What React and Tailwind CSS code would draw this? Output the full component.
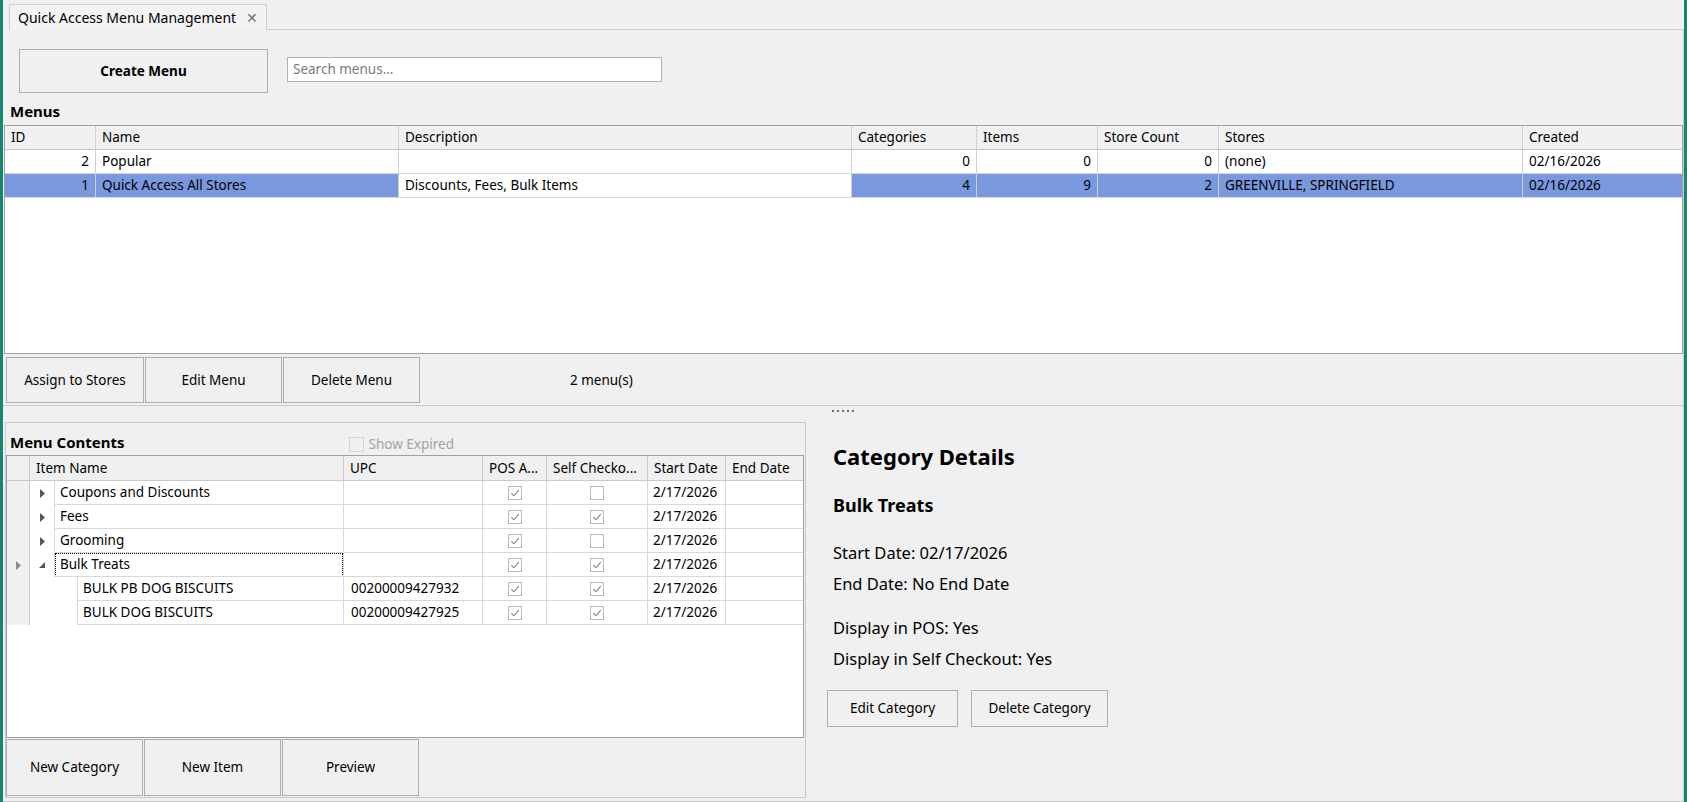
import React from 'react';

const menus = [
  { id: 2, name: 'Popular', desc: '', cats: 0, items: 0, count: 0, stores: '(none)', created: '02/16/2026' },
  { id: 1, name: 'Quick Access All Stores', desc: 'Discounts, Fees, Bulk Items', cats: 4, items: 9, count: 2, stores: 'GREENVILLE, SPRINGFIELD', created: '02/16/2026', selected: true },
];

const tree = [
  { name: 'Coupons and Discounts', level: 0, open: false, upc: '', pos: true, self: false },
  { name: 'Fees', level: 0, open: false, upc: '', pos: true, self: true },
  { name: 'Grooming', level: 0, open: false, upc: '', pos: true, self: false },
  { name: 'Bulk Treats', level: 0, open: true, upc: '', pos: true, self: true, current: true },
  { name: 'BULK PB DOG BISCUITS', level: 1, upc: '00200009427932', pos: true, self: true },
  { name: 'BULK DOG BISCUITS', level: 1, upc: '00200009427925', pos: true, self: true },
];

function Check({ checked }) {
  return (
    <span className="inline-flex w-[14px] h-[14px] items-center justify-center border border-[#b9b9b9] bg-white">
      {checked && (
        <svg width="10" height="10" viewBox="0 0 10 10">
          <path d="M1.3 5.2 L3.9 7.8 L8.8 2.2" fill="none" stroke="#808080" strokeWidth="1.1" />
        </svg>
      )}
    </span>
  );
}

function WinButton({ children, className = '' }) {
  return (
    <div className={`flex items-center justify-center border border-[#adadad] bg-[#f0f0f0] text-[13.5px] text-black ${className}`}>
      {children}
    </div>
  );
}

function MenusGrid() {
  const cell = 'h-full flex items-center border-r border-[#d0d0d0] px-[6px] truncate';
  return (
    <div className="ml-[1px] w-[1679px] h-[229px] border border-[#a0a0a0] bg-white flex flex-col text-[13.5px]">
      <div className="flex h-[24px] bg-[#f0f0f0] border-b border-[#c8c8c8]">
        <div className={`${cell} w-[91px]`}>ID</div>
        <div className={`${cell} w-[303px]`}>Name</div>
        <div className={`${cell} w-[453px]`}>Description</div>
        <div className={`${cell} w-[125px]`}>Categories</div>
        <div className={`${cell} w-[121px]`}>Items</div>
        <div className={`${cell} w-[121px]`}>Store Count</div>
        <div className={`${cell} w-[304px]`}>Stores</div>
        <div className="h-full flex items-center px-[6px] flex-1">Created</div>
      </div>
      {menus.map((m) => {
        const bg = m.selected ? 'bg-[#7a98dd]' : 'bg-white';
        return (
          <div key={m.id} className={`flex h-[24px] border-b border-[#d8d8d8] ${bg}`}>
            <div className={`${cell} w-[91px] justify-end`}>{m.id}</div>
            <div className={`${cell} w-[303px]`}>{m.name}</div>
            <div className={`${cell} w-[453px] bg-white`}>{m.desc}</div>
            <div className={`${cell} w-[125px] justify-end`}>{m.cats}</div>
            <div className={`${cell} w-[121px] justify-end`}>{m.items}</div>
            <div className={`${cell} w-[121px] justify-end`}>{m.count}</div>
            <div className={`${cell} w-[304px]`}>{m.stores}</div>
            <div className="h-full flex items-center px-[6px] flex-1">{m.created}</div>
          </div>
        );
      })}
      <div className="flex-1 bg-white" />
    </div>
  );
}

function Arrow({ open }) {
  if (open) {
    return (
      <svg width="6" height="6" viewBox="0 0 6 6">
        <polygon points="6,0 6,6 0,6" fill="#555555" />
      </svg>
    );
  }
  return (
    <svg width="5" height="9" viewBox="0 0 5 9">
      <polygon points="0,0 5,4.5 0,9" fill="#555555" />
    </svg>
  );
}

function ContentsGrid() {
  const hcell = 'h-full flex items-center border-r border-[#c8c8c8] px-[6px] truncate';
  return (
    <div className="w-[798px] h-[283px] border border-[#a0a0a0] bg-white flex flex-col text-[13.5px]">
      <div className="flex h-[25px] bg-[#f0f0f0] border-b border-[#c8c8c8] shrink-0">
        <div className="h-full w-[23px] border-r border-[#c8c8c8]" />
        <div className={`${hcell} w-[314px]`}>Item Name</div>
        <div className={`${hcell} w-[139px]`}>UPC</div>
        <div className={`${hcell} w-[64px]`}>POS A...</div>
        <div className={`${hcell} w-[101px]`}>Self Checko...</div>
        <div className={`${hcell} w-[78px]`}>Start Date</div>
        <div className="h-full flex items-center px-[6px] flex-1">End Date</div>
      </div>
      {tree.map((r) => (
        <div key={r.name} className="flex h-[24px] shrink-0">
          <div className="h-full w-[23px] bg-[#f0f0f0] border-r border-[#c8c8c8] flex items-center justify-center">
            {r.current && (
              <svg width="5" height="9" viewBox="0 0 5 9">
                <polygon points="0,0 5,4.5 0,9" fill="#8a8a8a" />
              </svg>
            )}
          </div>
          <div className={`h-full flex items-center justify-center ${r.level === 0 ? 'w-[24px]' : 'w-[47px]'}`}>
            {r.level === 0 && <Arrow open={r.open} />}
          </div>
          <div className="flex flex-1 h-full border-b border-[#d8d8d8]">
            <div className={`relative h-full flex items-center border-l border-r border-[#d8d8d8] px-[5px] truncate ${r.level === 0 ? 'w-[290px]' : 'w-[267px]'}`}>
              {r.name}
              {r.current && (
                <div className="absolute left-0 top-0 right-0 bottom-[-1px] border border-dotted border-black" />
              )}
            </div>
            <div className="h-full w-[139px] flex items-center border-r border-[#d8d8d8] px-[7px]">{r.upc}</div>
            <div className="h-full w-[64px] flex items-center justify-center border-r border-[#d8d8d8]">
              <Check checked={r.pos} />
            </div>
            <div className="h-full w-[101px] flex items-center justify-center border-r border-[#d8d8d8]">
              <Check checked={r.self} />
            </div>
            <div className="h-full w-[78px] flex items-center border-r border-[#d8d8d8] px-[5px]">2/17/2026</div>
            <div className="h-full flex-1" />
          </div>
        </div>
      ))}
      <div className="flex-1 bg-white" />
    </div>
  );
}

export default function App() {
  return (
    <div className="w-[1687px] h-[802px] flex bg-[#f0f0f0] overflow-hidden text-black font-['Segoe_UI','Noto_Sans',sans-serif]">
      <div className="w-[3px] h-full bg-[#12896f]" />
      <div className="flex-1 flex flex-col">
        {/* tab strip */}
        <div className="h-[30px] flex items-end shrink-0">
          <div className="w-[6px] h-full" />
          <div className="h-[26px] w-[258px] flex items-center border border-b-0 border-[#cfcfcf] bg-[#f3f3f3] pl-[8px] text-[14px]">
            <span>Quick Access Menu Management</span>
            <span className="ml-[10px] text-[#707070] text-[14px]">✕</span>
          </div>
          <div className="flex-1 h-full border-b border-[#cfcfcf]" />
        </div>

        <div className="flex-1 flex flex-col border-r border-b border-[#c8c8c8]">
          {/* top section */}
          <div className="flex flex-col shrink-0">
            <div className="flex items-start pt-[19px] pl-[16px]">
              <WinButton className="w-[249px] h-[44px] font-bold">Create Menu</WinButton>
              <div className="ml-[19px] mt-[8px] w-[375px] h-[25px] border border-[#b4b4b4] bg-white flex items-center px-[5px] text-[13.5px] text-[#7a7a7a]">
                Search menus...
              </div>
            </div>
            <div className="mt-[8px] h-[20px] flex items-center pl-[7px] text-[15px] font-bold">Menus</div>
            <div className="mt-[4px]">
              <MenusGrid />
            </div>
            <div className="h-[52px] flex items-start pt-[3px] pl-[3px] border-b border-[#c8c8c8]">
              <WinButton className="w-[138px] h-[46px]">Assign to Stores</WinButton>
              <WinButton className="w-[137px] h-[46px] ml-[1px]">Edit Menu</WinButton>
              <WinButton className="w-[137px] h-[46px] ml-[1px]">Delete Menu</WinButton>
              <div className="ml-[150px] h-[46px] flex items-center text-[13.5px]">2 menu(s)</div>
            </div>
          </div>

          {/* splitter */}
          <div className="h-[16px] shrink-0 flex justify-center pt-[4px]">
            <div className="flex gap-[3px] h-[2px]">
              <span className="w-[2px] h-[2px] bg-[#6e6e6e]" />
              <span className="w-[2px] h-[2px] bg-[#6e6e6e]" />
              <span className="w-[2px] h-[2px] bg-[#6e6e6e]" />
              <span className="w-[2px] h-[2px] bg-[#6e6e6e]" />
              <span className="w-[2px] h-[2px] bg-[#6e6e6e]" />
            </div>
          </div>

          {/* bottom section */}
          <div className="flex-1 flex">
            <div className="ml-[2px] w-[801px] h-[376px] border border-[#c8c8c8] flex flex-col">
              <div className="h-[32px] flex items-start pt-[9px] pl-[4px] shrink-0">
                <span className="text-[15px] font-bold leading-[20px]">Menu Contents</span>
                <div className="ml-[224px] mt-[2px] flex items-center">
                  <span className="w-[15px] h-[15px] border border-[#d4d4d4] bg-[#f0f0f0]" />
                  <span className="ml-[5px] text-[13.5px] text-[#a3a3a3]">Show Expired</span>
                </div>
              </div>
              <ContentsGrid />
              <div className="flex mt-[1px]">
                <WinButton className="w-[137px] h-[57px]">New Category</WinButton>
                <WinButton className="w-[137px] h-[57px] ml-[1px]">New Item</WinButton>
                <WinButton className="w-[137px] h-[57px] ml-[1px]">Preview</WinButton>
              </div>
            </div>

            <div className="flex-1 flex flex-col pl-[27px] pt-[20px]">
              <div className="h-[28px] leading-[28px] text-[22px] font-bold">Category Details</div>
              <div className="mt-[23px] h-[24px] leading-[24px] text-[18px] font-bold">Bulk Treats</div>
              <div className="mt-[25px] h-[22px] leading-[22px] text-[16.5px]">Start Date: 02/17/2026</div>
              <div className="mt-[9px] h-[22px] leading-[22px] text-[16.5px]">End Date: No End Date</div>
              <div className="mt-[22px] h-[22px] leading-[22px] text-[16.5px]">Display in POS: Yes</div>
              <div className="mt-[9px] h-[22px] leading-[22px] text-[16.5px]">Display in Self Checkout: Yes</div>
              <div className="flex mt-[20px] -ml-[6px]">
                <WinButton className="w-[131px] h-[37px]">Edit Category</WinButton>
                <WinButton className="w-[137px] h-[37px] ml-[13px]">Delete Category</WinButton>
              </div>
            </div>
          </div>
        </div>
      </div>
      <div className="w-[3px] h-full bg-[#12896f]" />
    </div>
  );
}
